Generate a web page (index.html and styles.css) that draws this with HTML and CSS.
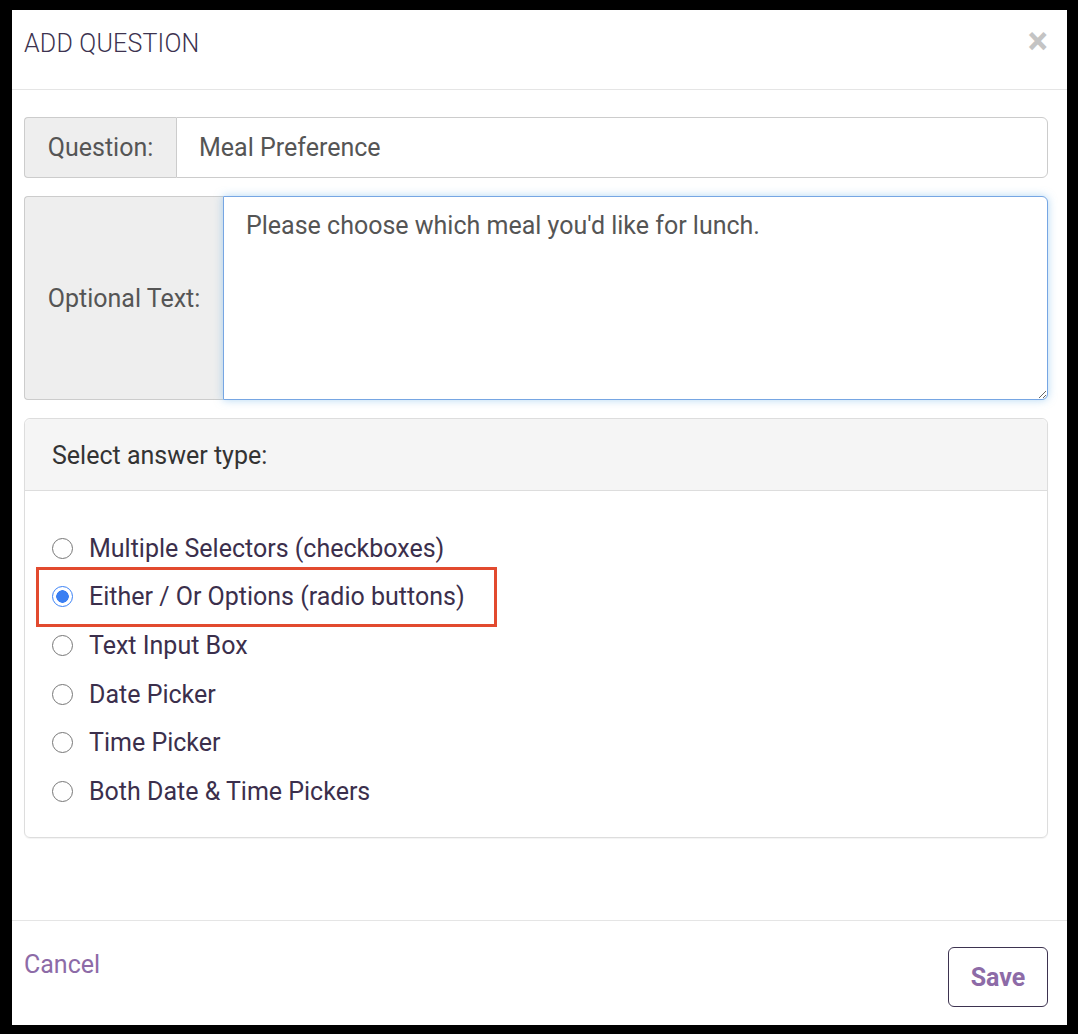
FILE: index.html
```html
<!DOCTYPE html>
<html>
<head>
<meta charset="utf-8">
<link rel="stylesheet" href="styles.css">
</head>
<body>
<div class="modal">
  <div class="modal-header">
    <h4 class="modal-title">ADD QUESTION</h4>
    <span class="close">&times;</span>
  </div>
  <div class="modal-body">
    <div class="input-group q-group">
      <span class="addon q-addon">Question:</span>
      <input class="field" type="text" value="Meal Preference">
    </div>
    <div class="input-group t-group">
      <span class="addon t-addon">Optional Text:</span>
      <textarea class="field area">Please choose which meal you'd like for lunch.</textarea>
    </div>
    <div class="panel">
      <div class="panel-heading">Select answer type:</div>
      <div class="panel-body">
        <label class="opt"><input type="radio" name="t"><span>Multiple Selectors (checkboxes)</span></label>
        <label class="opt highlight"><input type="radio" name="t" checked><span>Either / Or Options (radio buttons)</span></label>
        <label class="opt"><input type="radio" name="t"><span>Text Input Box</span></label>
        <label class="opt"><input type="radio" name="t"><span>Date Picker</span></label>
        <label class="opt"><input type="radio" name="t"><span>Time Picker</span></label>
        <label class="opt"><input type="radio" name="t"><span>Both Date &amp; Time Pickers</span></label>
      </div>
    </div>
  </div>
  <div class="modal-footer">
    <a class="cancel">Cancel</a>
    <button class="save">Save</button>
  </div>
</div>
</body>
</html>
```
FILE: styles.css
```css
html, body {
  margin: 0;
  padding: 0;
  background: #000;
  height: 1034px;
  overflow: hidden;
}
body {
  font-family: Roboto, "Liberation Sans", sans-serif;
}
.modal {
  background: #fff;
  margin: 10px 11px 0 12px;
  height: 1015px;
  display: flex;
  flex-direction: column;
}
.modal-header {
  height: 79px;
  border-bottom: 1px solid #e5e5e5;
  display: flex;
  align-items: center;
  justify-content: space-between;
  padding: 0 19px 0 12px;
}
.modal-title {
  margin: -13px 0 0 0;
  font-weight: 300;
  font-size: 25px;
  color: #3d3350;
  letter-spacing: 0.2px;
}
.close {
  font-size: 38px;
  font-weight: 700;
  color: #c4c4c4;
  line-height: 1;
  margin-top: -17px;
  margin-right: 0;
}
.modal-body {
  flex: 1;
  padding: 27px 19px 0 12px;
}
.input-group {
  display: flex;
}
.addon {
  background: #eee;
  border: 1px solid #ccc;
  border-right: 0;
  color: #555;
  font-size: 25px;
  display: flex;
  align-items: center;
  justify-content: center;
  box-sizing: border-box;
  border-radius: 4px 0 0 4px;
}
.q-group {
  height: 61px;
}
.q-addon {
  width: 152px;
}
.t-group {
  height: 204px;
  margin-top: 18px;
}
.t-addon {
  width: 199px;
}
.field {
  flex: 1;
  border: 1px solid #ccc;
  border-radius: 0 6px 6px 0;
  font-family: Roboto, "Liberation Sans", sans-serif;
  font-size: 25px;
  color: #555;
  padding: 0 22px;
  outline: none;
  box-sizing: border-box;
  margin: 0;
}
.area {
  border-color: #76a6e3;
  box-shadow: 0 0 8px rgba(102, 175, 233, 0.5);
  padding: 13px 22px;
  resize: vertical;
  line-height: 1.3;
}
.panel {
  margin-top: 18px;
  border: 1px solid #ddd;
  border-radius: 6px;
  height: 420px;
  box-sizing: border-box;
  box-shadow: 0 1px 1px rgba(0,0,0,0.05);
}
.panel-heading {
  height: 72px;
  background: #f5f5f5;
  border-bottom: 1px solid #ddd;
  border-radius: 6px 6px 0 0;
  box-sizing: border-box;
  display: flex;
  align-items: center;
  padding-left: 27px;
  padding-top: 1px;
  font-size: 25px;
  color: #333;
}
.panel-body {
  padding: 33px 27px 0 27px;
  display: flex;
  flex-direction: column;
  align-items: flex-start;
}
.opt {
  position: relative;
  display: inline-flex;
  align-items: center;
  height: 48.6px;
  font-size: 25px;
  color: #3b2f4c;
}
.opt input {
  appearance: none;
  -webkit-appearance: none;
  width: 21px;
  height: 21px;
  margin: 0 16px 0 0;
  border: 1.5px solid #777;
  border-radius: 50%;
  box-sizing: border-box;
  background: #fff;
}
.opt input:checked {
  border: 1.5px solid #3b82f6;
  background: radial-gradient(circle, #3b7ff2 0 6px, #fff 6.5px);
}
.highlight::after {
  content: "";
  position: absolute;
  left: -16px;
  right: -32px;
  top: -6px;
  bottom: -6px;
  border: 3px solid #e24a2f;
}
.modal-footer {
  height: 105px;
  border-top: 1px solid #e5e5e5;
  box-sizing: border-box;
  display: flex;
  align-items: center;
  justify-content: space-between;
  padding: 0 19px 0 12px;
}
.cancel {
  color: #8d6ba7;
  font-size: 25px;
  margin-top: -18px;
}
.save {
  width: 100px;
  height: 60px;
  border: 1.5px solid #3d3350;
  border-radius: 6px;
  background: #fff;
  color: #8d6ba7;
  font-family: Roboto, "Liberation Sans", sans-serif;
  font-weight: 700;
  font-size: 25px;
  margin-top: 8px;
}
```
